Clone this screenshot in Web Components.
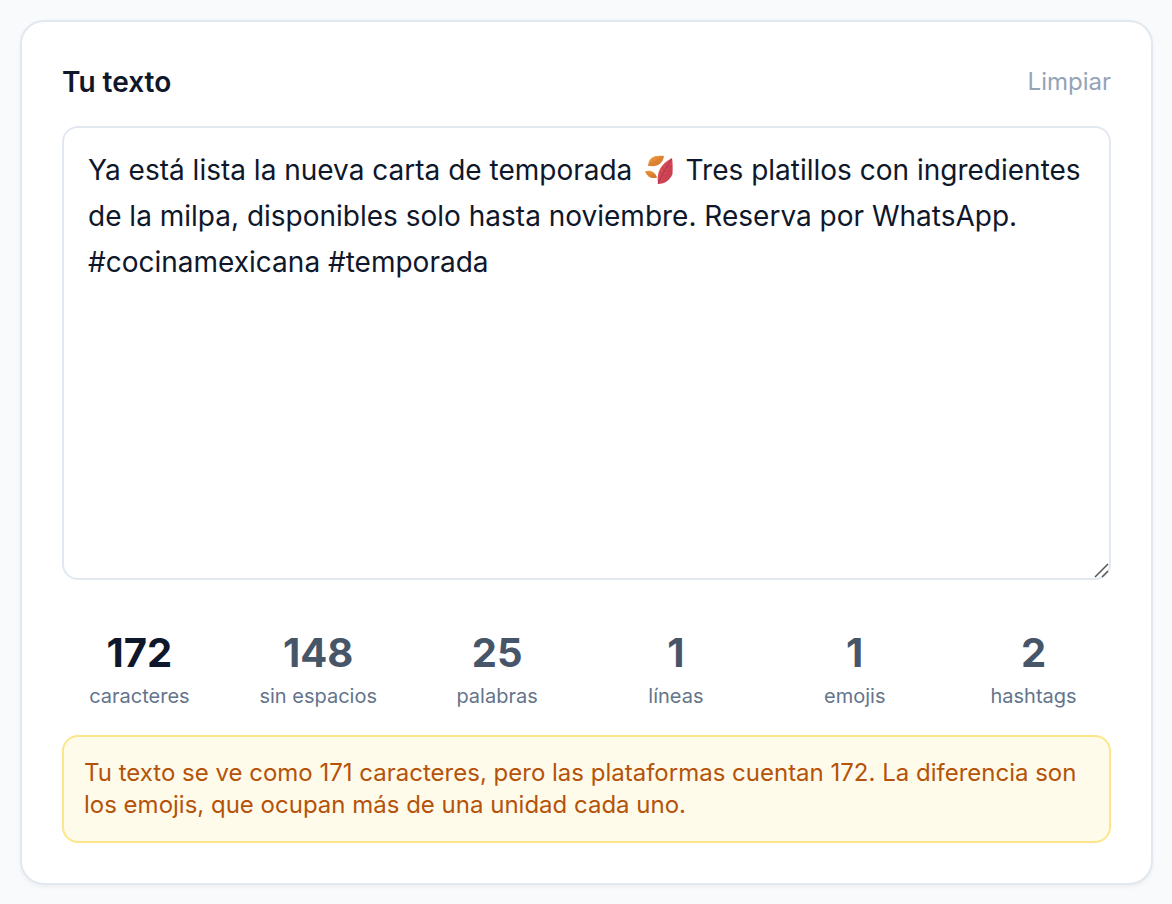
<!DOCTYPE html>
<html lang="es">
<head>
<meta charset="utf-8">
<meta name="viewport" content="width=device-width, initial-scale=1">
<title>Contador de caracteres</title>
<style>
  body {
    margin: 0;
    padding: 20px 19px 20px 20px;
    background: #f8fafc;
    color: #0f172a;
    font-family: Inter, "Liberation Sans", sans-serif;
  }
</style>
</head>
<body>
<text-counter>
  <count-stat slot="stats" value="172" main>caracteres</count-stat>
  <count-stat slot="stats" value="148">sin espacios</count-stat>
  <count-stat slot="stats" value="25">palabras</count-stat>
  <count-stat slot="stats" value="1">líneas</count-stat>
  <count-stat slot="stats" value="1">emojis</count-stat>
  <count-stat slot="stats" value="2">hashtags</count-stat>
  <notice-box slot="notice">Tu texto se ve como 171 caracteres, pero las plataformas cuentan 172. La diferencia son los emojis, que ocupan más de una unidad cada uno.</notice-box>
</text-counter>

<script>
class CountStat extends HTMLElement {
  constructor() {
    super();
    this.attachShadow({ mode: 'open' }).innerHTML = `
      <style>
        :host { display: block; text-align: center; }
        .value { font-size: 40px; line-height: 56px; font-weight: 700; color: #475569; }
        :host([main]) .value { color: #0f172a; }
        .label { font-size: 20px; line-height: 30px; color: #64748b; }
      </style>
      <div class="value"></div>
      <div class="label"><slot></slot></div>`;
  }
  connectedCallback() {
    this.shadowRoot.querySelector('.value').textContent = this.getAttribute('value');
  }
}
customElements.define('count-stat', CountStat);

class NoticeBox extends HTMLElement {
  constructor() {
    super();
    this.attachShadow({ mode: 'open' }).innerHTML = `
      <style>
        :host {
          display: block;
          padding: 20px;
          border: 2px solid #fde68a;
          border-radius: 16px;
          background: #fffbeb;
          color: #b45309;
          font-size: 24px;
          line-height: 32px;
        }
      </style>
      <slot></slot>`;
  }
}
customElements.define('notice-box', NoticeBox);

class TextCounter extends HTMLElement {
  constructor() {
    super();
    this.attachShadow({ mode: 'open' }).innerHTML = `
      <style>
        :host {
          display: block;
          padding: 40px;
          border: 2px solid #e2e8f0;
          border-radius: 24px;
          background: #fff;
          box-shadow: 0 2px 4px rgb(0 0 0 / 5%);
        }
        header { display: flex; align-items: center; justify-content: space-between; margin-bottom: 24px; }
        label { font-size: 28px; line-height: 40px; font-weight: 600; }
        button { padding: 0; border: 0; background: none; font: inherit; font-size: 24px; line-height: 32px; color: #94a3b8; cursor: pointer; }
        .field { position: relative; }
        textarea {
          display: block;
          box-sizing: border-box;
          width: 100%;
          height: 454px;
          padding: 19px 24px;
          border: 2px solid #e2e8f0;
          border-radius: 16px;
          background: #fff;
          color: inherit;
          font: inherit;
          font-size: 28px;
          line-height: 46px;
          resize: vertical;
          outline: none;
        }
        textarea::-webkit-resizer {
          background: url("data:image/svg+xml,%3Csvg xmlns='http://www.w3.org/2000/svg' width='15' height='15'%3E%3Cpath d='M1 14L14 1M8 14l6-6' stroke='%23555' stroke-width='1.5' fill='none'/%3E%3C/svg%3E") right bottom no-repeat;
        }
        /* Leaf artwork drawn over the system emoji */
        .leaves { position: absolute; left: 576px; top: 24px; width: 44px; height: 40px; background: #fff; pointer-events: none; }
        .leaves[hidden] { display: none; }
        @media (max-width: 760px) { .leaves { display: none; } }
        .stats { display: grid; grid-template-columns: repeat(6, 1fr); gap: 24px; margin: 45px 0 24px; }
      </style>
      <header>
        <label for="text">Tu texto</label>
        <button type="button">Limpiar</button>
      </header>
      <div class="field">
        <textarea id="text" spellcheck="false">Ya está lista la nueva carta de temporada 🍂&#x200A; Tres platillos con ingredientes de la milpa, disponibles solo hasta noviembre. Reserva por WhatsApp. #cocinamexicana #temporada</textarea>
        <svg class="leaves" viewBox="0 0 44 40" aria-hidden="true">
          <defs>
            <linearGradient id="amber" x1="0" y1="0" x2="1" y2="1"><stop offset="0" stop-color="#f5a03c"/><stop offset="1" stop-color="#c96f30"/></linearGradient>
            <linearGradient id="red" x1="0" y1="0" x2="1" y2="1"><stop offset="0" stop-color="#dd5b4e"/><stop offset=".5" stop-color="#d44654"/><stop offset="1" stop-color="#bb3a50"/></linearGradient>
          </defs>
          <path d="M10 15.500C11 8 15 5 26 6C25 14 18 18 10 15.500Z" fill="url(#amber)"/>
          <path d="M10 15.500Q17 13 25 6.500" fill="none" stroke="#d9782c" stroke-width=".8"/>
          <path d="M7 21.500C12 19.500 17 21.500 19 27.500C14 29 9.500 27.500 7 21.500Z" fill="url(#amber)"/>
          <path d="M8 22Q13 25 18.500 27.300" fill="none" stroke="#d9782c" stroke-width=".8"/>
          <path d="M20 34C18.500 22 22 14.500 34 8C34.700 12 34.800 18 34.500 24C32 30 27 34 20 34Z" fill="url(#red)"/>
          <path d="M20 33.500Q25 22 33.500 9" fill="none" stroke="#a72f55" stroke-width=".9"/>
          <path d="M24 26l-2-5M26.500 21.500l-1.500-4.500M29 17.500l-1-4M24 26l6-1M26.500 21.500l6-1M29 17.500l4.500-1" fill="none" stroke="#b83a50" stroke-width=".6"/>
        </svg>
      </div>
      <div class="stats"><slot name="stats"></slot></div>
      <slot name="notice"></slot>`;
    const text = this.shadowRoot.querySelector('textarea');
    const leaves = this.shadowRoot.querySelector('.leaves');
    text.addEventListener('input', () => leaves.setAttribute('hidden', ''));
    this.shadowRoot.querySelector('button').addEventListener('click', () => {
      text.value = '';
      leaves.setAttribute('hidden', '');
    });
  }
}
customElements.define('text-counter', TextCounter);
</script>
</body>
</html>
